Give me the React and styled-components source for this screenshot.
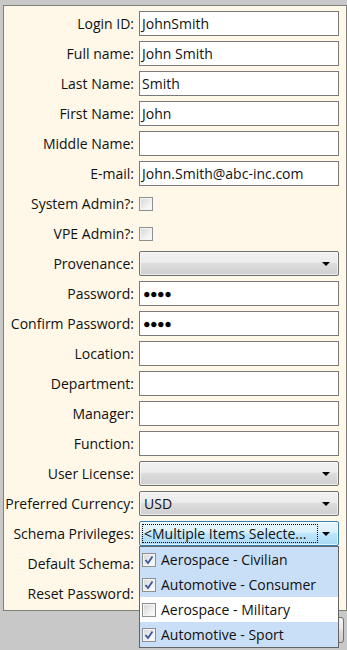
import React from "react";
import styled, { createGlobalStyle } from "styled-components";

const GlobalStyle = createGlobalStyle`
body{
  margin:0;
  background:#c8c8c8;
  font-family:"Open Sans","Noto Sans",sans-serif;
  font-size:14px;
  color:#111;
}
`

const Page = styled.div`
width:347px;
height:650px;
overflow:hidden;
padding:5px 0 0 3px;
box-sizing:border-box;
`

const Panel = styled.div`
width:344px;
box-sizing:border-box;
border:1px solid #7f7f7f;
background:#fff8e8;
padding:5px 6px 4px 0;
display:grid;
grid-template-columns:130px 200px;
grid-auto-rows:25px;
column-gap:5px;
row-gap:5px;
`

const Label = styled.div`
display:flex;
align-items:center;
justify-content:flex-end;
white-space:nowrap;
line-height:1;
`

const Field = styled.div`
box-sizing:border-box;
height:25px;
border:1px solid #7a7a7a;
background:#fff;
display:flex;
align-items:center;
padding-left:2px;
white-space:nowrap;
`

const Dots = styled.span`
font-size:12.5px;
letter-spacing:-0.5px;
padding-left:1px;
color:#000;
`

const CheckCell = styled.div`
display:flex;
align-items:center;
`

const Box = styled.span`
box-sizing:border-box;
width:14px;
height:14px;
border:1px solid #8e8f8f;
background:linear-gradient(135deg,#d6d6d6 0%,#f4f4f4 70%,#ffffff 100%);
box-shadow:inset 0 0 0 1px #f4f4f4;
display:inline-flex;
align-items:center;
justify-content:center;
flex:none;
`

const Combo = styled.div`
position:relative;
box-sizing:border-box;
height:25px;
border:1px solid ${(p)=>p.active ? "#3c7fb1" : "#707070"};
border-radius:2px;
background:${(p)=>p.active
  ? "linear-gradient(#eaf6fd 0%,#d9f0fc 45%,#bee6fd 50%,#a7d9f5 100%)"
  : "linear-gradient(#f2f2f2 0%,#ebebeb 45%,#dddddd 50%,#cfcfcf 100%)"};
box-shadow:inset 0 0 0 1px rgba(255,255,255,0.6);
display:flex;
align-items:center;
`

const ComboText = styled.div`
flex:1;
height:19px;
margin-left:2px;
margin-right:4px;
padding-left:1px;
display:flex;
align-items:center;
white-space:nowrap;
overflow:hidden;
border:1px dotted ${(p)=>p.focus ? "#000" : "transparent"};
box-sizing:border-box;
`

const Arrow = styled.span`
width:0;
height:0;
border-left:4px solid transparent;
border-right:4px solid transparent;
border-top:4px solid #000;
margin-right:8px;
flex:none;
`

const List = styled.div`
position:absolute;
top:24px;
left:-1px;
width:200px;
box-sizing:border-box;
border:1px solid #646464;
background:#fff;
z-index:5;
`

const Item = styled.div`
height:25px;
display:flex;
align-items:center;
padding-left:2px;
gap:5px;
background:${(p)=>p.checked ? "#c9def7" : "#fff"};
white-space:nowrap;
`

const Bottom = styled.div`
display:flex;
justify-content:flex-end;
padding:6px 3px 0 0;
`

const Button = styled.button`
width:80px;
height:26px;
border:1px solid #707070;
border-radius:3px;
background:linear-gradient(#f2f2f2 0%,#ebebeb 45%,#dddddd 50%,#cfcfcf 100%);
font-family:inherit;
font-size:14px;
`

const Check = ({checked}) => (
  <Box>
    {checked && (
      <svg width="10" height="10" viewBox="0 0 10 10">
        <path d="M1.5 5 L4 8 L8.5 1.5" fill="none" stroke="#3b5a9a" strokeWidth="1.8" />
      </svg>
    )}
  </Box>
)

const schemas = [
  {name:"Aerospace - Civilian", checked:true},
  {name:"Automotive - Consumer", checked:true},
  {name:"Aerospace - Military", checked:false},
  {name:"Automotive - Sport", checked:true},
]

const rows = [
  {label:"Login ID:", type:"text", value:"JohnSmith"},
  {label:"Full name:", type:"text", value:"John Smith"},
  {label:"Last Name:", type:"text", value:"Smith"},
  {label:"First Name:", type:"text", value:"John"},
  {label:"Middle Name:", type:"text", value:""},
  {label:"E-mail:", type:"text", value:"John.Smith@abc-inc.com"},
  {label:"System Admin?:", type:"check"},
  {label:"VPE Admin?:", type:"check"},
  {label:"Provenance:", type:"combo", value:""},
  {label:"Password:", type:"password"},
  {label:"Confirm Password:", type:"password"},
  {label:"Location:", type:"text", value:""},
  {label:"Department:", type:"text", value:""},
  {label:"Manager:", type:"text", value:""},
  {label:"Function:", type:"text", value:""},
  {label:"User License:", type:"combo", value:""},
  {label:"Preferred Currency:", type:"combo", value:"USD"},
  {label:"Schema Privileges:", type:"schema"},
  {label:"Default Schema:", type:"none"},
  {label:"Reset Password:", type:"none"},
]

const renderField = (row) => {
  switch(row.type){
    case "text":
      return <Field>{row.value}</Field>
    case "password":
      return <Field><Dots>●●●●</Dots></Field>
    case "check":
      return <CheckCell><Check checked={false}/></CheckCell>
    case "combo":
      return (
        <Combo>
          <ComboText>{row.value}</ComboText>
          <Arrow/>
        </Combo>
      )
    case "schema":
      return (
        <Combo active>
          <ComboText focus>&lt;Multiple Items Selecte...</ComboText>
          <Arrow/>
          <List>
            {schemas.map((s)=>(
              <Item key={s.name} checked={s.checked}>
                <Check checked={s.checked}/>
                {s.name}
              </Item>
            ))}
          </List>
        </Combo>
      )
    default:
      return <div/>
  }
}

const App = () => {
  return(
    <Page>
      <GlobalStyle/>
      <Panel>
        {rows.map((row)=>(
          <React.Fragment key={row.label}>
            <Label>{row.label}</Label>
            {renderField(row)}
          </React.Fragment>
        ))}
      </Panel>
      <Bottom>
        <Button>OK</Button>
      </Bottom>
    </Page>
  )
}

export default App
